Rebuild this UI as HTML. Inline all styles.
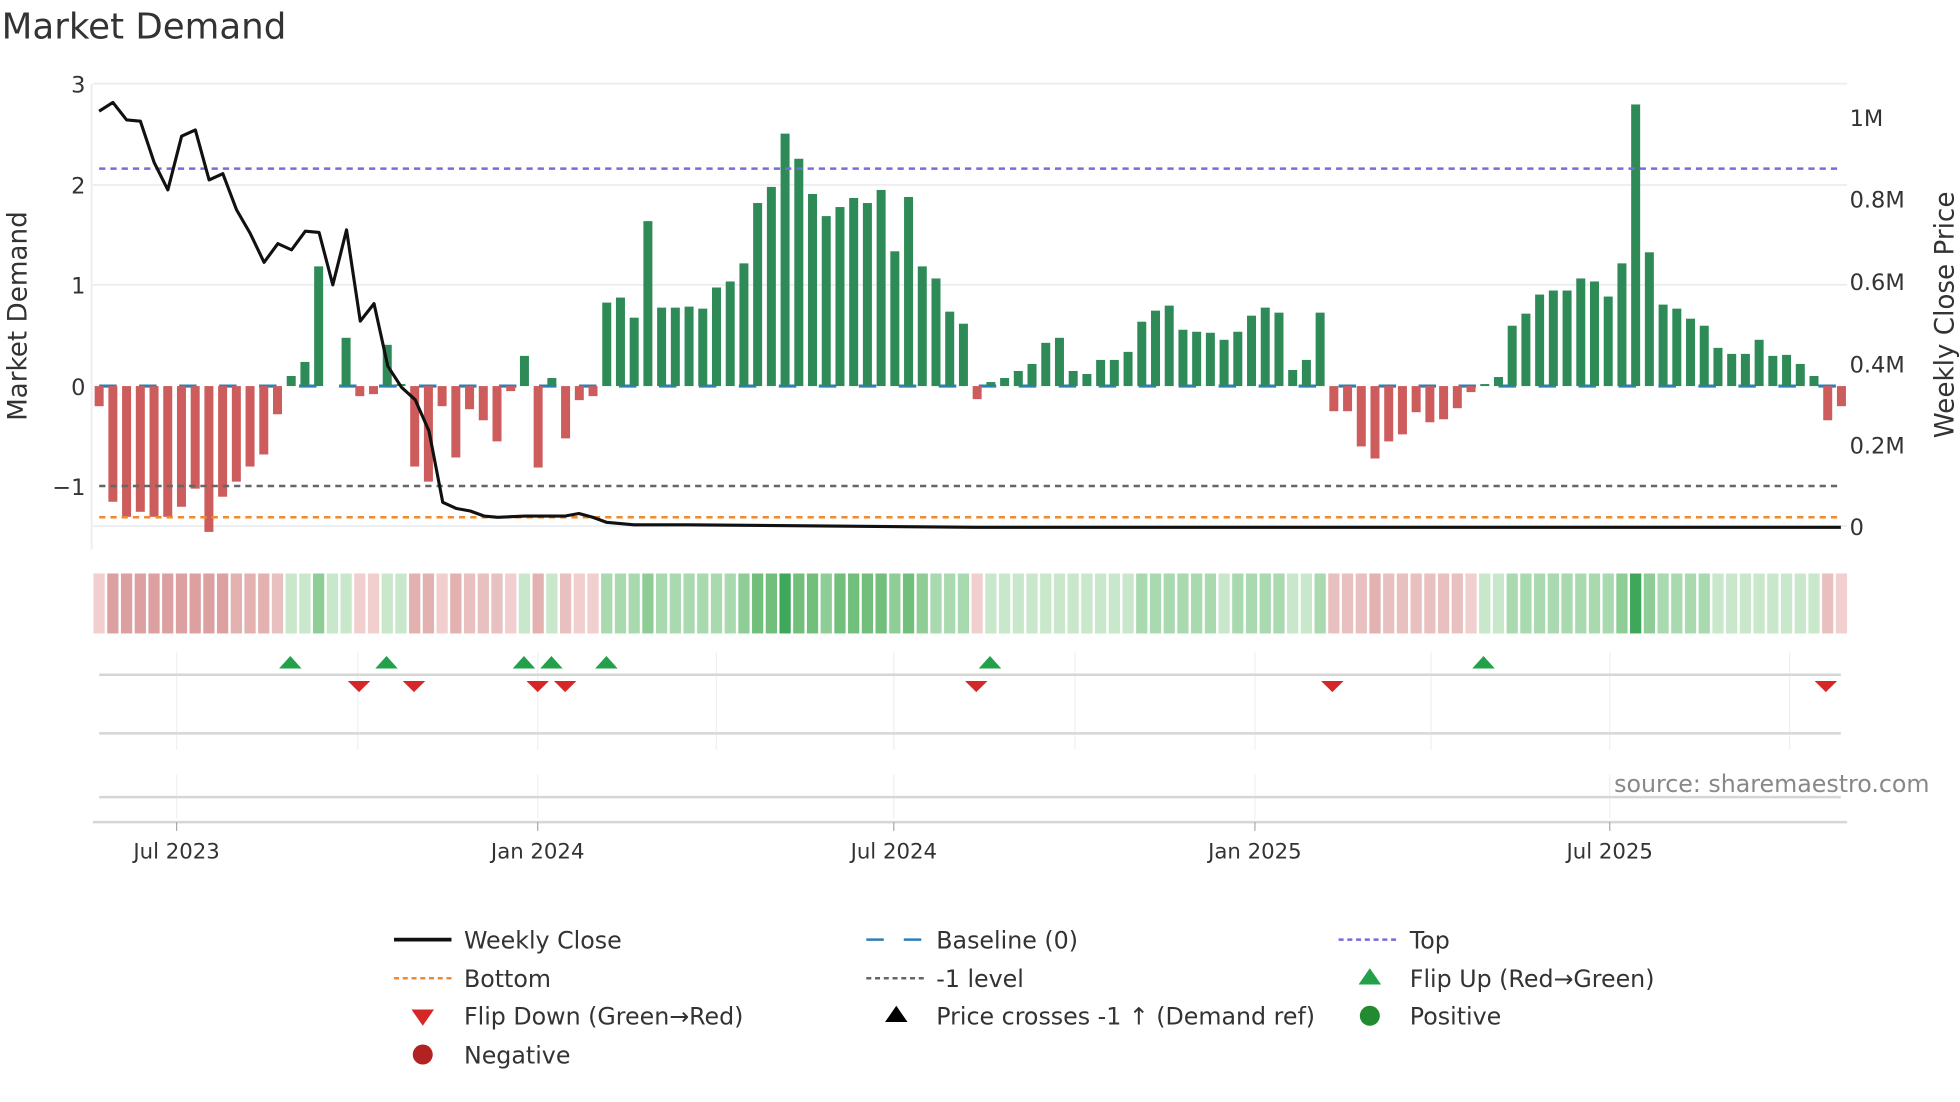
<!DOCTYPE html>
<html><head><meta charset="utf-8"><style>
html,body{margin:0;padding:0;background:#fff;}
svg{display:block;font-family:"DejaVu Sans","Liberation Sans",sans-serif;}
</style></head><body>
<svg id="s" width="1960" height="1102" viewBox="0 0 1568 882" xmlns="http://www.w3.org/2000/svg">
<rect width="1568" height="882" fill="#fff"/>
<text x="1" y="31" font-size="28.5" fill="#333">Market Demand</text>
<g stroke="#eceef2" stroke-width="1.5">
<line x1="74" y1="67" x2="1478" y2="67"/>
<line x1="74" y1="148" x2="1478" y2="148"/>
<line x1="74" y1="228" x2="1478" y2="228"/>
<line x1="74" y1="421" x2="1478" y2="421"/>
<line x1="73" y1="67" x2="73" y2="440"/>
</g>
<g font-size="18" fill="#333" text-anchor="end">
<text x="68" y="74">3</text><text x="68" y="155">2</text><text x="68" y="235">1</text><text x="68" y="316">0</text><text x="68" y="396">−1</text>
</g>
<g font-size="18" fill="#333">
<text x="1480" y="101">1M</text><text x="1480" y="166">0.8M</text><text x="1480" y="232">0.6M</text><text x="1480" y="298">0.4M</text><text x="1480" y="363">0.2M</text><text x="1480" y="428">0</text>
</g>
<text transform="translate(21,253) rotate(-90)" font-size="21" fill="#333" text-anchor="middle">Market Demand</text>
<text transform="translate(1563,252) rotate(-90)" font-size="21" fill="#333" text-anchor="middle">Weekly Close Price</text>
<line x1="79" y1="309" x2="1473" y2="309" stroke="#2f7fb5" stroke-width="2.5" stroke-dasharray="14,18"/>
<g id="bars"></g>
<line x1="79" y1="135" x2="1473" y2="135" stroke="#7b6bd6" stroke-width="2" stroke-dasharray="5,4"/>
<line x1="79" y1="389" x2="1473" y2="389" stroke="#666" stroke-width="2" stroke-dasharray="5,4"/>
<line x1="79" y1="414" x2="1473" y2="414" stroke="#f08a2c" stroke-width="2" stroke-dasharray="5,4"/>
<polyline fill="none" stroke="#111" stroke-width="2.5" stroke-linejoin="round" points="79,89 90,82 101,96 112,97 123,130 134,152 145,109 156,104 167,144 178,139 189,168 200,187 211,210 222,195 233,200 244,185 255,186 266,228 277,184 288,257 299,243 310,293 321,310 332,320 343,345 354,402 365,407 376,409 387,413 398,414 420,413 452,413 463,411 474,414 485,418 507,420 550,420 780,422 1473,422"/>
<g id="heat"></g>
<g stroke="#eef0f2" stroke-width="1">
<line x1="141" y1="522" x2="141" y2="600"/><line x1="286" y1="522" x2="286" y2="600"/><line x1="430" y1="522" x2="430" y2="600"/><line x1="573" y1="522" x2="573" y2="600"/><line x1="715" y1="522" x2="715" y2="600"/><line x1="860" y1="522" x2="860" y2="600"/><line x1="1004" y1="522" x2="1004" y2="600"/><line x1="1145" y1="522" x2="1145" y2="600"/><line x1="1288" y1="522" x2="1288" y2="600"/><line x1="1432" y1="522" x2="1432" y2="600"/>
<line x1="141" y1="620" x2="141" y2="655"/><line x1="430" y1="620" x2="430" y2="655"/><line x1="715" y1="620" x2="715" y2="655"/><line x1="1004" y1="620" x2="1004" y2="655"/><line x1="1288" y1="620" x2="1288" y2="655"/>
</g>
<g stroke="#d6d6d6" stroke-width="2">
<line x1="79" y1="540" x2="1473" y2="540"/>
<line x1="79" y1="587" x2="1473" y2="587"/>
<line x1="79" y1="638" x2="1473" y2="638"/>
<line x1="74" y1="658" x2="1478" y2="658"/>
</g>
<g stroke="#aaa" stroke-width="1"><line x1="141" y1="658" x2="141" y2="665"/><line x1="430" y1="658" x2="430" y2="665"/><line x1="715" y1="658" x2="715" y2="665"/><line x1="1004" y1="658" x2="1004" y2="665"/><line x1="1288" y1="658" x2="1288" y2="665"/></g>
<g font-size="17" fill="#333" text-anchor="middle">
<text x="141" y="687">Jul 2023</text><text x="430" y="687">Jan 2024</text><text x="715" y="687">Jul 2024</text><text x="1004" y="687">Jan 2025</text><text x="1288" y="687">Jul 2025</text>
</g>
<text x="1544" y="634" font-size="19" fill="#888" text-anchor="end">source: sharemaestro.com</text>
<g fill="#22a04a">
<polygon points="232,525 223,535 241,535"/><polygon points="309,525 300,535 318,535"/><polygon points="419,525 410,535 428,535"/><polygon points="441,525 432,535 450,535"/><polygon points="485,525 476,535 494,535"/><polygon points="792,525 783,535 801,535"/><polygon points="1187,525 1178,535 1196,535"/>
</g>
<g fill="#d62728">
<polygon points="287,554 278,545 296,545"/><polygon points="331,554 322,545 340,545"/><polygon points="430,554 421,545 439,545"/><polygon points="452,554 443,545 461,545"/><polygon points="781,554 772,545 790,545"/><polygon points="1066,554 1057,545 1075,545"/><polygon points="1461,554 1452,545 1470,545"/>
</g>
<g font-size="19" fill="#333">
<line x1="315" y1="752" x2="361" y2="752" stroke="#111" stroke-width="3"/><text x="371" y="759">Weekly Close</text>
<line x1="693" y1="752" x2="739" y2="752" stroke="#2f7fb5" stroke-width="2" stroke-dasharray="14,16"/><text x="749" y="759">Baseline (0)</text>
<line x1="1071" y1="752" x2="1117" y2="752" stroke="#7b6bd6" stroke-width="2" stroke-dasharray="4,3"/><text x="1128" y="759">Top</text>
<line x1="315" y1="783" x2="361" y2="783" stroke="#f08a2c" stroke-width="2" stroke-dasharray="4,3"/><text x="371" y="790">Bottom</text>
<line x1="693" y1="783" x2="739" y2="783" stroke="#666" stroke-width="2" stroke-dasharray="4,3"/><text x="749" y="790">-1 level</text>
<polygon points="1096,775 1087,788 1105,788" fill="#22a04a"/><text x="1128" y="790">Flip Up (Red→Green)</text>
<polygon points="338,821 329,808 347,808" fill="#d62728"/><text x="371" y="820">Flip Down (Green→Red)</text>
<polygon points="717,805 708,818 726,818" fill="#000"/><text x="749" y="820">Price crosses -1 ↑ (Demand ref)</text>
<circle cx="1096" cy="813" r="8" fill="#238b2f"/><text x="1128" y="820">Positive</text>
<circle cx="338" cy="844" r="8" fill="#b22222"/><text x="371" y="851">Negative</text>
</g>
</svg>
<script>
var v=[-0.2,-1.15,-1.3,-1.25,-1.3,-1.3,-1.2,-1.02,-1.45,-1.1,-0.95,-0.8,-0.68,-0.28,0.1,0.24,1.19,0,0.48,-0.1,-0.08,0.41,0.02,-0.8,-0.95,-0.2,-0.71,-0.23,-0.34,-0.55,-0.05,0.3,-0.81,0.08,-0.52,-0.14,-0.1,0.83,0.88,0.68,1.64,0.78,0.78,0.79,0.77,0.98,1.04,1.22,1.82,1.98,2.51,2.26,1.91,1.69,1.78,1.87,1.82,1.95,1.34,1.88,1.19,1.07,0.74,0.62,-0.13,0.04,0.08,0.15,0.22,0.43,0.48,0.15,0.12,0.26,0.26,0.34,0.64,0.75,0.8,0.56,0.54,0.53,0.46,0.54,0.7,0.78,0.73,0.16,0.26,0.73,-0.25,-0.25,-0.6,-0.72,-0.55,-0.48,-0.26,-0.36,-0.33,-0.22,-0.06,0.02,0.09,0.6,0.72,0.91,0.95,0.95,1.07,1.04,0.89,1.22,2.8,1.33,0.81,0.77,0.67,0.6,0.38,0.32,0.32,0.46,0.3,0.31,0.22,0.1,-0.34,-0.2];
var ns="http://www.w3.org/2000/svg",b=document.getElementById("bars"),h=document.getElementById("heat");
function r(p,x,y,w,hh,f){var e=document.createElementNS(ns,"rect");e.setAttribute("x",x);e.setAttribute("y",y);e.setAttribute("width",w);e.setAttribute("height",hh);e.setAttribute("fill",f);p.appendChild(e);}
for(var i=0;i<v.length;i++){var x=79+i*10.98,val=v[i],hp=Math.abs(val)*80.5;
if(val>0)r(b,x-3.6,309-hp,7.2,hp,"#2e8b57");else if(val<0)r(b,x-3.6,309,7.2,hp,"#cd5c5c");
var c;if(val>=0){c=val>2.5?"#3fa75a":val>1.7?"#72bf7c":val>1.1?"#8fcd97":val>0.5?"#a9d9ae":"#c8e7cb";}else{c=val<-1?"#dba09f":val<-0.6?"#e2b1b0":val<-0.2?"#e8c0bf":"#f0cfce";}
r(h,x-4.5,459,9,48,c);}
</script>
</body></html>
